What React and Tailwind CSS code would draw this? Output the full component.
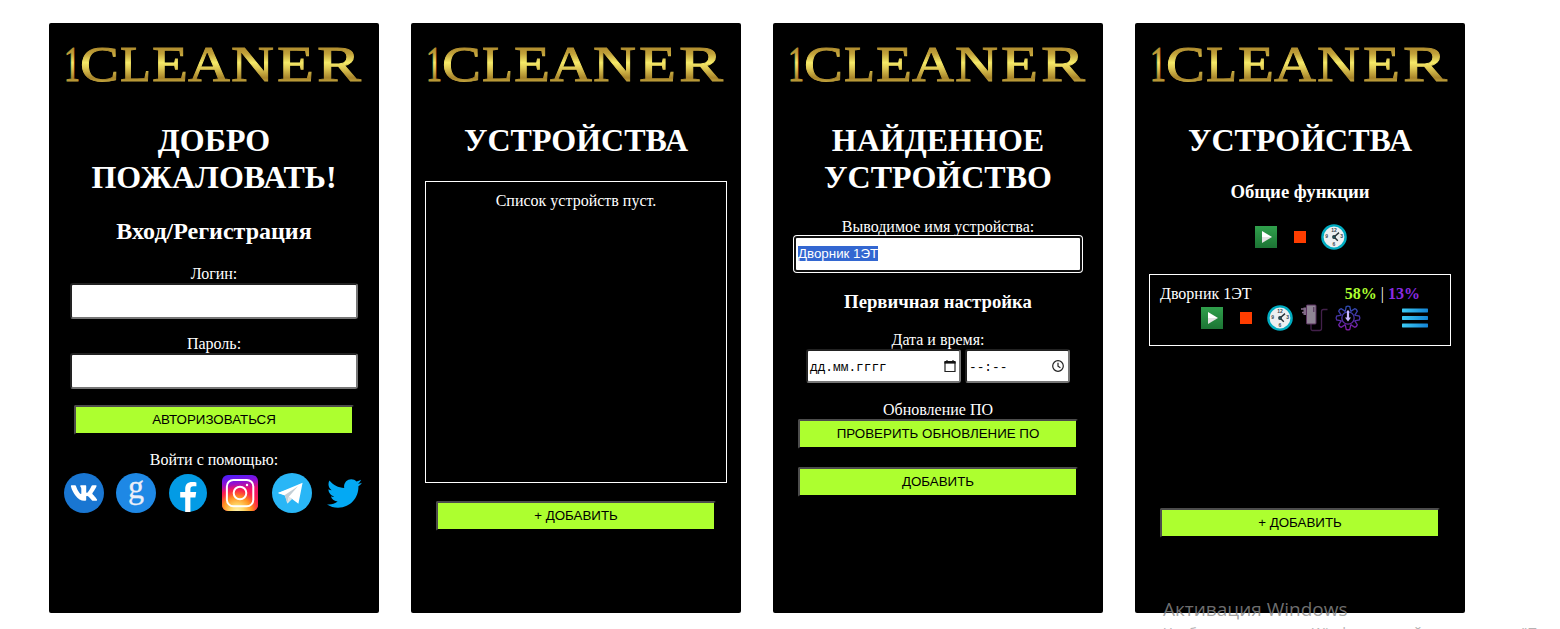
import React from "react";
import { FaVk, FaTwitter } from "react-icons/fa";

const SERIF = "font-['Liberation_Serif',serif]";
const SANS = "font-['Liberation_Sans',sans-serif]";

function Logo() {
  const letters = [
    ["1", 15, 16],
    ["C", 31, 39],
    ["L", 71, 31],
    ["E", 103, 36],
    ["A", 139, 42],
    ["N", 182, 43],
    ["E", 228, 37],
    ["R", 268, 44],
  ];
  return (
    <svg width="330" height="99" viewBox="0 0 330 99" className="block shrink-0" aria-label="1CLEANER">
      <defs>
        <linearGradient id="gold" gradientUnits="userSpaceOnUse" x1="0" y1="22" x2="0" y2="66">
          <stop offset="0" stopColor="#a8842a" />
          <stop offset="0.2" stopColor="#c2a23a" />
          <stop offset="0.4" stopColor="#f6ea68" />
          <stop offset="0.52" stopColor="#e2cc55" />
          <stop offset="0.75" stopColor="#a8842a" />
          <stop offset="1" stopColor="#f0e062" />
        </linearGradient>
      </defs>
      <g fill="url(#gold)" stroke="url(#gold)" strokeWidth="0.9" fontSize="51" className={SERIF}>
        {letters.map(([ch, x, w], i) => (
          <text key={i} x={x} y="58" textLength={w} lengthAdjust="spacingAndGlyphs">
            {ch}
          </text>
        ))}
      </g>
    </svg>
  );
}

function Panel({ children }) {
  return (
    <section className={`flex h-[590px] w-[330px] shrink-0 flex-col items-center rounded-[2px] bg-black text-center text-base leading-[18px] text-white ${SERIF}`}>
      <Logo />
      {children}
    </section>
  );
}

function Title({ children }) {
  return <h1 className="text-[32px] leading-[37px] font-bold">{children}</h1>;
}

function Button({ className = "", children }) {
  return (
    <button
      className={`h-[30px] w-[280px] shrink-0 rounded-[2px] border-2 border-t-[#4c4c4c] border-r-black border-b-black border-l-[#4c4c4c] bg-[#adff2f] pb-[2px] text-[13.333px] leading-[15px] text-black ${SANS} ${className}`}
    >
      {children}
    </button>
  );
}

const FIELD = "rounded-[3px] border-2 border-t-[#222] border-r-[#767676] border-b-[#767676] border-l-[#222] bg-white";

function GoogleIcon() {
  return (
    <svg width="40" height="40" viewBox="0 0 40 40">
      <circle cx="20" cy="20" r="20" fill="#1e88e5" />
      <text x="12" y="25" textLength="16" lengthAdjust="spacingAndGlyphs" fontSize="34" fill="#eceff8" stroke="#eceff8" strokeWidth="0.3" className={SERIF}>g</text>
    </svg>
  );
}

function FacebookIcon() {
  return (
    <svg width="40" height="40" viewBox="0 0 40 40">
      <circle cx="20" cy="20" r="19" fill="#039be5" />
      <path d="M17.2 39V24.4H12.2V19H17.2V16.2C17.2 11.4 19.6 9 24.2 9C26.2 9 27.4 9.2 28.4 9.4V13.2H25.4C23.2 13.2 22.4 14.2 22.4 16.2V19H28.2L27.4 24.4H22.4V39Z" fill="#fff" />
    </svg>
  );
}

function InstagramIcon() {
  return (
    <svg width="40" height="40" viewBox="0 0 40 40">
      <defs>
        <linearGradient id="ig-base" x1="0" y1="0" x2="0.15" y2="1">
          <stop offset="0" stopColor="#4020ff" />
          <stop offset="0.25" stopColor="#8a10d8" />
          <stop offset="0.5" stopColor="#f0106a" />
          <stop offset="1" stopColor="#f8204a" />
        </linearGradient>
        <radialGradient id="ig-glow" cx="0.42" cy="1.02" r="0.75">
          <stop offset="0" stopColor="#fff3b0" />
          <stop offset="0.25" stopColor="#ffd968" />
          <stop offset="0.55" stopColor="#ff9020" />
          <stop offset="0.8" stopColor="#ff2a40" stopOpacity="0.8" />
          <stop offset="1" stopColor="#ff1060" stopOpacity="0" />
        </radialGradient>
      </defs>
      <rect x="2" y="2" width="36" height="36" rx="6" fill="url(#ig-base)" />
      <rect x="2" y="2" width="36" height="36" rx="6" fill="url(#ig-glow)" />
      <rect x="6.9" y="6.9" width="26.4" height="26.4" rx="6.5" fill="none" stroke="#fff" strokeWidth="2" />
      <circle cx="20" cy="20" r="6.3" fill="none" stroke="#fff" strokeWidth="2" />
      <circle cx="27" cy="12" r="1.2" fill="#fff" />
    </svg>
  );
}

function TelegramIcon() {
  return (
    <svg width="40" height="40" viewBox="0 0 40 40">
      <circle cx="20" cy="20" r="20" fill="#29b6f6" />
      <path d="M6 20L30.6 9.8L26.4 30.8L19.4 25.4L15.6 30.4L12.8 22Z" fill="#fff" />
      <path d="M6 20L25.5 13.2L12.8 22.4Z" fill="#fff" />
      <path d="M12.8 22L26 13.2L17 23.6L15.2 30.4Z" fill="#c3ced5" />
      <path d="M15.2 30.4L17 23.6L20.2 26Z" fill="#dfe5e8" />
    </svg>
  );
}

function PlayIcon() {
  return (
    <svg width="30" height="30" viewBox="0 0 30 30">
      <defs>
        <linearGradient id="play-bg" x1="0" y1="0" x2="0" y2="1">
          <stop offset="0" stopColor="#30a04c" />
          <stop offset="1" stopColor="#1c7434" />
        </linearGradient>
      </defs>
      <rect x="4" y="4" width="22" height="22" fill="url(#play-bg)" />
      <path d="M11 9L21 15H11Z" fill="#fff" />
      <path d="M11 21L21 15H11Z" fill="#e2e2e2" />
    </svg>
  );
}

function StopIcon() {
  return (
    <svg width="30" height="30" viewBox="0 0 30 30">
      <rect x="9" y="9" width="12" height="12" fill="#ff3d00" />
    </svg>
  );
}

function ClockIcon() {
  return (
    <svg width="30" height="30" viewBox="0 0 30 30">
      <circle cx="15" cy="15" r="11.6" fill="#eceff1" stroke="#00acc1" strokeWidth="2.4" />
      <g fill="#37474f" fontSize="5" fontWeight="bold" textAnchor="middle" className={SANS}>
        <text x="15" y="9.6">12</text>
        <text x="22.6" y="16.2">3</text>
        <text x="15" y="24">6</text>
        <text x="7.6" y="16.2">9</text>
      </g>
      <path d="M15 15L20 10.6M15 15L18.8 18.8" stroke="#263238" strokeWidth="1.4" />
      <circle cx="15" cy="15" r="1.9" fill="#263238" />
      <circle cx="15" cy="15" r="0.6" fill="#00acc1" />
    </svg>
  );
}

function AdapterIcon() {
  return (
    <svg width="30" height="30" viewBox="0 0 30 30">
      <path d="M12 21V26Q12 27.5 13.5 27.5H20.5Q22.5 27.5 22.5 25.5V8.5Q22.5 6.5 24.5 6.5H28.5" fill="none" stroke="#42204a" strokeWidth="1.3" />
      <path d="M2 6H7M3 9.5H7" stroke="#8a6f90" strokeWidth="1.6" />
      <rect x="4.5" y="4.5" width="3" height="7.5" fill="#806a86" />
      <rect x="7.5" y="2" width="9.5" height="19" rx="0.8" fill="#8f8594" stroke="#59305f" strokeWidth="1" />
      <path d="M14.8 4V9" stroke="#4c2855" strokeWidth="1" />
    </svg>
  );
}

function GearIcon() {
  const petals = [0, 45, 90, 135, 180, 225, 270, 315];
  return (
    <svg width="30" height="30" viewBox="0 0 30 30">
      <defs>
        <linearGradient id="gear-line" gradientUnits="userSpaceOnUse" x1="0" y1="2" x2="0" y2="28">
          <stop offset="0" stopColor="#2b50b4" />
          <stop offset="0.5" stopColor="#4a31a4" />
          <stop offset="1" stopColor="#8a1aa6" />
        </linearGradient>
        <mask id="gear-mask">
          <g fill="none" stroke="#fff" strokeWidth="1.3">
            {petals.map((a) => (
              <path key={a} d="M12.2 8.4L13.2 3.6Q15 2.6 16.8 3.6L17.8 8.4" transform={`rotate(${a} 15 15)`} />
            ))}
            <circle cx="15" cy="15" r="6.2" />
          </g>
        </mask>
      </defs>
      <rect width="30" height="30" fill="url(#gear-line)" mask="url(#gear-mask)" />
      <path d="M13.9 8Q15 6.6 16.1 8V14.6H18L15 18.4L12 14.6H13.9Z" fill="#c7b8ff" />
    </svg>
  );
}

function MenuIcon() {
  return (
    <svg width="30" height="30" viewBox="0 0 30 30">
      <defs>
        <linearGradient id="menu-bar" gradientUnits="userSpaceOnUse" x1="2" y1="0" x2="28" y2="0">
          <stop offset="0" stopColor="#3ccbf4" />
          <stop offset="1" stopColor="#1484d6" />
        </linearGradient>
      </defs>
      <g fill="url(#menu-bar)">
        <rect x="2" y="5.6" width="26" height="3.8" rx="0.6" />
        <rect x="2" y="13.1" width="26" height="3.8" rx="0.6" />
        <rect x="2" y="20.6" width="26" height="3.8" rx="0.6" />
      </g>
    </svg>
  );
}

function LoginPanel() {
  return (
    <Panel>
      <Title>ДОБРО<br />ПОЖАЛОВАТЬ!</Title>
      <h2 className="mt-[22px] text-2xl leading-[27px] font-bold">Вход/Регистрация</h2>
      <label className="mt-5">Логин:</label>
      <input className={`h-9 w-72 shrink-0 ${FIELD}`} />
      <label className="mt-4">Пароль:</label>
      <input type="password" className={`h-9 w-72 shrink-0 ${FIELD}`} />
      <Button className="mt-4">АВТОРИЗОВАТЬСЯ</Button>
      <p className="mt-4">Войти с помощью:</p>
      <div className="mt-1 flex gap-3">
        <span className="flex size-10 items-center justify-center rounded-full bg-[#1976d2]">
          <FaVk size={28} color="#fff" />
        </span>
        <GoogleIcon />
        <FacebookIcon />
        <InstagramIcon />
        <TelegramIcon />
        <span className="flex size-10 items-center justify-center">
          <FaTwitter size={35} color="#03a9f4" />
        </span>
      </div>
    </Panel>
  );
}

function EmptyDevicesPanel() {
  return (
    <Panel>
      <Title>УСТРОЙСТВА</Title>
      <div className="mt-[22px] h-[302px] w-[302px] border border-white pt-[10px]">Список устройств пуст.</div>
      <Button className="mt-[18px]">+ ДОБАВИТЬ</Button>
    </Panel>
  );
}

function FoundDevicePanel() {
  return (
    <Panel>
      <Title>НАЙДЕННОЕ<br />УСТРОЙСТВО</Title>
      <label className="mt-[22px]">Выводимое имя устройства:</label>
      <div className={`flex h-9 w-72 items-center rounded-[3px] border-2 border-[#101010] bg-white pb-[2px] pl-[2px] ring-1 ring-white ${SANS}`}>
        <span className="bg-[#3367d1] text-[13.333px] leading-[15px] text-white">Дворник 1ЭТ</span>
      </div>
      <h3 className="mt-[19px] text-[18.72px] leading-[21px] font-bold">Первичная настройка</h3>
      <label className="mt-[19px]">Дата и время:</label>
      <div className="flex gap-1 font-['Liberation_Mono',monospace] text-[12.8px] leading-[15px] text-black">
        <div className={`flex h-[34px] w-[155px] items-center justify-between pr-[3px] pl-[2px] ${FIELD}`}>
          <span className="pt-[2px]">дд.мм.гггг</span>
          <svg width="12" height="14" viewBox="0 0 12 14">
            <path d="M1 3V12.5H11V3M3 1V3M9 1V3" fill="none" stroke="#222" strokeWidth="1.2" />
            <rect x="0.4" y="2" width="11.2" height="2.6" fill="#111" />
          </svg>
        </div>
        <div className={`flex h-[34px] w-[105px] items-center justify-between pr-[4px] pl-[2px] ${FIELD}`}>
          <span className="pt-[2px]">--:--</span>
          <svg width="12" height="12" viewBox="0 0 12 12" fill="none" stroke="#222" strokeWidth="1.2">
            <circle cx="6" cy="6" r="5.3" />
            <path d="M6 2.8V6.2L8.4 7.8" />
          </svg>
        </div>
      </div>
      <p className="mt-[18px]">Обновление ПО</p>
      <Button>ПРОВЕРИТЬ ОБНОВЛЕНИЕ ПО</Button>
      <Button className="mt-[18px]">ДОБАВИТЬ</Button>
    </Panel>
  );
}

function DevicesPanel() {
  return (
    <Panel>
      <Title>УСТРОЙСТВА</Title>
      <h3 className="mt-[22px] text-[18.72px] leading-[21px] font-bold">Общие функции</h3>
      <div className="mt-5 flex gap-1">
        <PlayIcon />
        <StopIcon />
        <ClockIcon />
      </div>
      <div className="mt-[22px] h-[72px] w-[302px] border border-white pt-[10px] pr-[30px] pl-[10px]">
        <div className="flex justify-between">
          <span>Дворник 1ЭТ</span>
          <span>
            <b className="text-[#adff2f]">58%</b> | <b className="text-[#8a2be2]">13%</b>
          </span>
        </div>
        <div className="-mr-[10px] flex gap-1 pl-[37px]">
          <PlayIcon />
          <StopIcon />
          <ClockIcon />
          <AdapterIcon />
          <GearIcon />
          <span className="ml-auto">
            <MenuIcon />
          </span>
        </div>
      </div>
      <Button className="mt-[162px]">+ ДОБАВИТЬ</Button>
    </Panel>
  );
}

export default function App() {
  return (
    <main className="relative h-[629px] w-[1560px] overflow-hidden bg-white">
      <div className="flex gap-8 pt-[23px] pl-[49px]">
        <LoginPanel />
        <EmptyDevicesPanel />
        <FoundDevicePanel />
        <DevicesPanel />
      </div>
      <div className="absolute top-[595px] left-[1163px] font-['Open_Sans',sans-serif] whitespace-nowrap text-[#8c8c8c]/80">
        <div className="text-[19px] leading-[28px]">Активация Windows</div>
        <div className="text-[14.25px] leading-[19px] text-[#b4b4b4]">Чтобы активировать Windows, перейдите в раздел "Параметры".</div>
      </div>
    </main>
  );
}
